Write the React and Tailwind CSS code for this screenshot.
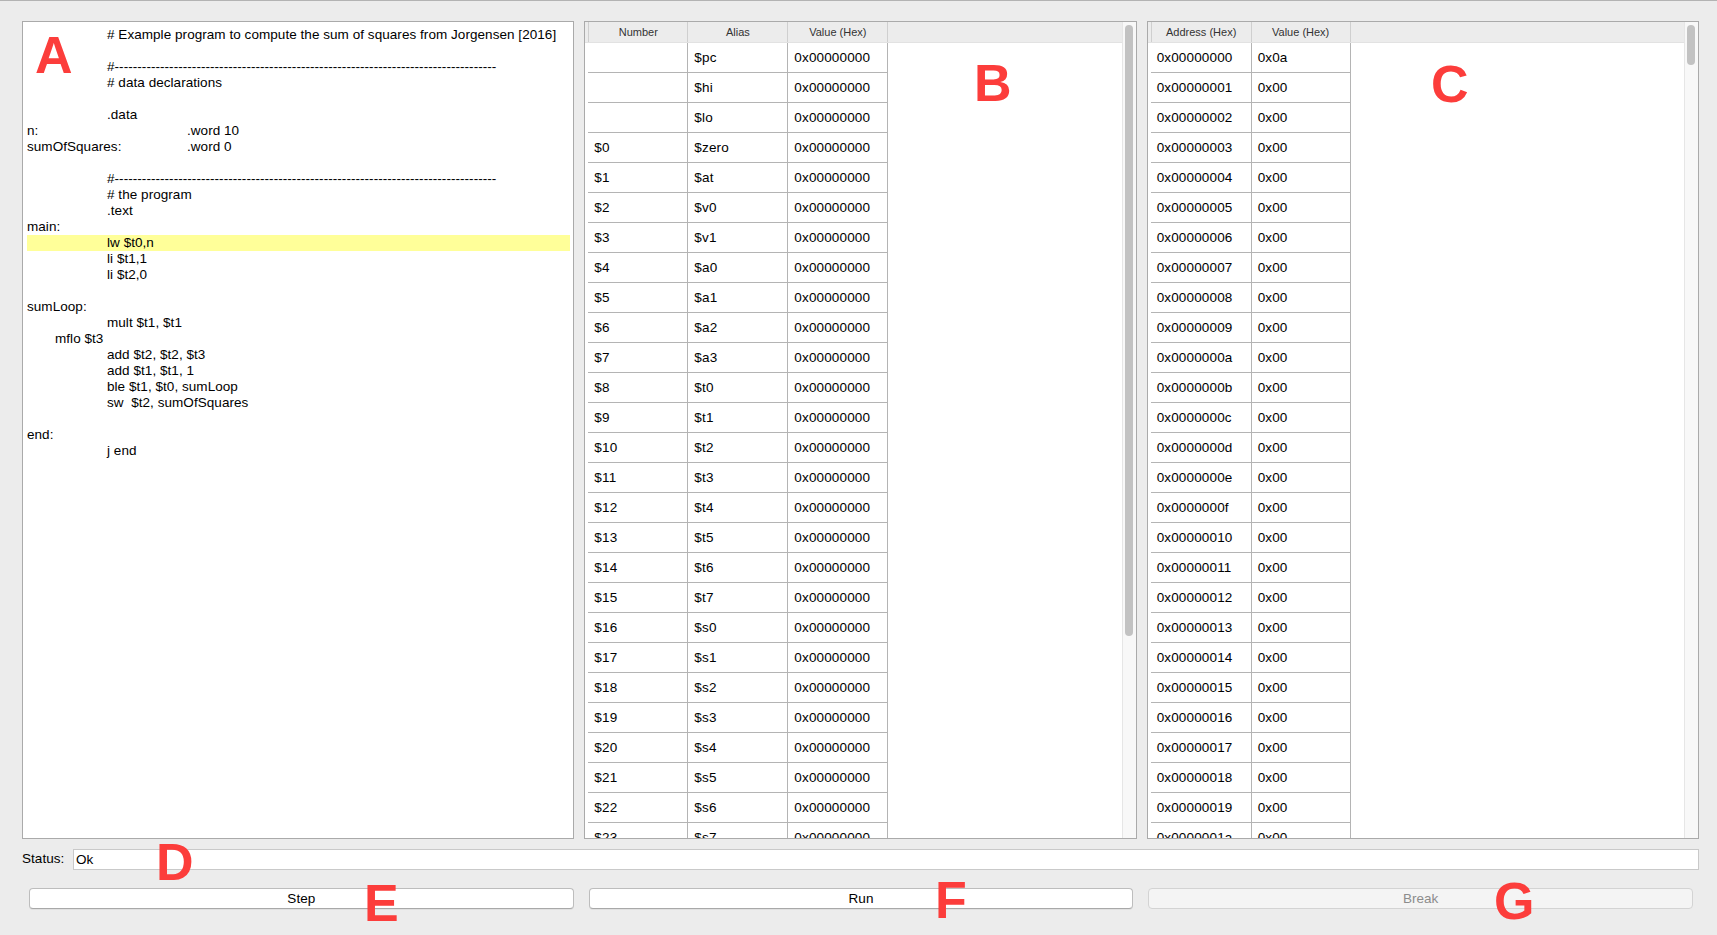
import React from "react";

const DASH = "#" + "-".repeat(84);

const codeLines = [
  [{ x: 80, t: "# Example program to compute the sum of squares from Jorgensen [2016]" }],
  [],
  [{ x: 80, t: DASH }],
  [{ x: 80, t: "# data declarations" }],
  [],
  [{ x: 80, t: ".data" }],
  [{ x: 0, t: "n:" }, { x: 160, t: ".word 10" }],
  [{ x: 0, t: "sumOfSquares:" }, { x: 160, t: ".word 0" }],
  [],
  [{ x: 80, t: DASH }],
  [{ x: 80, t: "# the program" }],
  [{ x: 80, t: ".text" }],
  [{ x: 0, t: "main:" }],
  [{ x: 80, t: "lw $t0,n" }],
  [{ x: 80, t: "li $t1,1" }],
  [{ x: 80, t: "li $t2,0" }],
  [],
  [{ x: 0, t: "sumLoop:" }],
  [{ x: 80, t: "mult $t1, $t1" }],
  [{ x: 28, t: "mflo $t3" }],
  [{ x: 80, t: "add $t2, $t2, $t3" }],
  [{ x: 80, t: "add $t1, $t1, 1" }],
  [{ x: 80, t: "ble $t1, $t0, sumLoop" }],
  [{ x: 80, t: "sw  $t2, sumOfSquares" }],
  [],
  [{ x: 0, t: "end:" }],
  [{ x: 80, t: "j end" }],
];

const aliases = [
  "zero", "at", "v0", "v1", "a0", "a1", "a2", "a3",
  "t0", "t1", "t2", "t3", "t4", "t5", "t6", "t7",
  "s0", "s1", "s2", "s3", "s4", "s5", "s6", "s7",
  "t8", "t9", "k0", "k1", "gp", "sp", "fp", "ra",
];

const regRows = [
  ["", "$pc", "0x00000000"],
  ["", "$hi", "0x00000000"],
  ["", "$lo", "0x00000000"],
  ...aliases.map((a, i) => ["$" + i, "$" + a, "0x00000000"]),
];

const memRows = Array.from({ length: 30 }, (_, i) => [
  "0x" + i.toString(16).padStart(8, "0"),
  i === 0 ? "0x0a" : "0x00",
]);

function Label({ children, className }) {
  return (
    <div
      className={
        "absolute text-[52px] leading-none font-bold text-[#fc3d3b] font-['Liberation_Sans',Arial,sans-serif] " +
        className
      }
    >
      {children}
    </div>
  );
}

function Table({ headers, widths, rows, thumbH }) {
  return (
    <div className="flex h-full border border-[#aaaaaa] bg-white overflow-hidden">
      <div className="flex-1 flex flex-col overflow-hidden">
        <div className="flex h-[21px] shrink-0 bg-[#ececec] pl-[3px] border-b border-[#e2e2e2]">
          {headers.map((h, i) => (
            <div
              key={h}
              className={
                "h-full flex items-center justify-center text-[11px] text-[#333] border-r border-[#cfcfcf] " +
                (i === 0 ? "border-l " : "") +
                widths[i]
              }
            >
              {h}
            </div>
          ))}
        </div>
        <div className="flex-1 overflow-hidden pl-[3px]">
          {rows.map((r, ri) => (
            <div key={ri} className="flex h-[30px]">
              {r.map((c, ci) => (
                <div
                  key={ci}
                  className={
                    "h-full flex items-center pl-[6px] pt-[2px] text-[13.5px] tracking-[0.15px] text-black border-b border-r border-[#b4b4b4] " +
                    widths[ci]
                  }
                >
                  {c}
                </div>
              ))}
            </div>
          ))}
        </div>
      </div>
      <div className="w-[14px] shrink-0 bg-[#f8f8f8] border-l border-[#e6e6e6] pt-[3px] pl-[2px]">
        <div className={"w-[8px] rounded-full bg-[#c2c2c2] " + thumbH} />
      </div>
    </div>
  );
}

export default function App() {
  return (
    <div className="relative w-[1717px] h-[935px] overflow-hidden bg-[#ececec] border-t border-[#b3b3b3] font-['Liberation_Sans',Arial,sans-serif] text-black">
      <div className="grid grid-cols-3 gap-x-[10px] pl-[22px] pr-[18px] pt-[20px] h-[838px]">
        {/* Panel A */}
        <div className="h-full border border-[#aaaaaa] bg-white pt-[5px] pl-[4px] pr-[3px] overflow-hidden">
          {codeLines.map((line, i) => (
            <div
              key={i}
              className={
                "relative h-[16px] text-[13.5px] tracking-[0.05px] leading-[16px] whitespace-pre " +
                (i === 13 ? "bg-[#ffff99]" : "")
              }
            >
              {line.map((s, j) => (
                <span key={j} className="absolute top-0" style={{ left: s.x }}>
                  {s.t}
                </span>
              ))}
            </div>
          ))}
        </div>
        {/* Panel B */}
        <Table
          headers={["Number", "Alias", "Value (Hex)"]}
          widths={["w-[100px]", "w-[100px]", "w-[100px]"]}
          rows={regRows}
          thumbH="h-[611px]"
        />
        {/* Panel C */}
        <Table
          headers={["Address (Hex)", "Value (Hex)"]}
          widths={["w-[101px]", "w-[99px]"]}
          rows={memRows}
          thumbH="h-[40px]"
        />
      </div>

      {/* Status */}
      <div className="flex items-center mt-[10px] pl-[22px] pr-[18px] h-[21px]">
        <span className="text-[13.5px] tracking-[0.05px] w-[51px]">Status:</span>
        <div className="flex-1 h-full bg-white border border-[#c9c9c9] flex items-center pl-[2px] pt-[1px] text-[13.5px] tracking-[0.05px]">
          Ok
        </div>
      </div>

      {/* Buttons */}
      <div className="grid grid-cols-3 gap-x-[15px] pl-[29px] pr-[24px] mt-[18px]">
        <button className="h-[21px] bg-white border border-[#bdbdbd] border-b-[#a8a8a8] rounded-[4px] text-[13.5px] tracking-[0.05px] text-black leading-none shadow-[0_1px_0_rgba(0,0,0,0.05)]">
          Step
        </button>
        <button className="h-[21px] bg-white border border-[#bdbdbd] border-b-[#a8a8a8] rounded-[4px] text-[13.5px] tracking-[0.05px] text-black leading-none shadow-[0_1px_0_rgba(0,0,0,0.05)]">
          Run
        </button>
        <button className="h-[21px] bg-[#f4f4f4] border border-[#d3d3d3] rounded-[4px] text-[13.5px] tracking-[0.05px] text-[#8c8c8c] leading-none">
          Break
        </button>
      </div>

      <Label className="left-[35px] top-[28px]">A</Label>
      <Label className="left-[974px] top-[56px]">B</Label>
      <Label className="left-[1431px] top-[57px]">C</Label>
      <Label className="left-[156px] top-[835px]">D</Label>
      <Label className="left-[364px] top-[876px]">E</Label>
      <Label className="left-[935px] top-[873px]">F</Label>
      <Label className="left-[1494px] top-[874px]">G</Label>
    </div>
  );
}
